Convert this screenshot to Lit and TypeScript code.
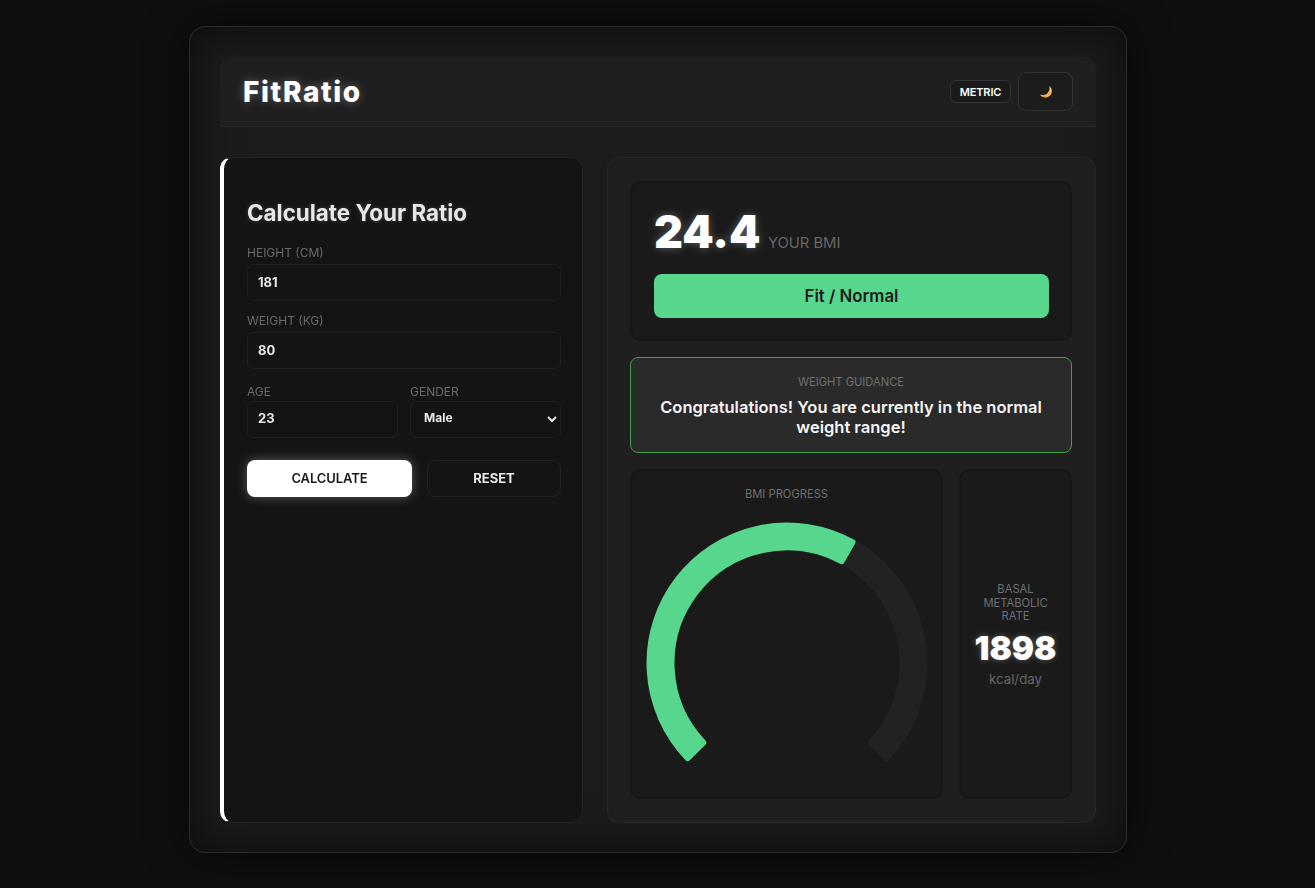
import { LitElement, html, css, svg } from 'lit'
import { customElement, property } from 'lit/decorators.js'

const CX = 145
const CY = 145
const OUTER = 140.5
const INNER = 112.5
const CORNER = 3

// point on circle, angle in degrees clockwise from 12 o'clock
const polar = (r: number, deg: number) => {
  const a = (deg * Math.PI) / 180
  return `${(CX + r * Math.sin(a)).toFixed(2)} ${(CY - r * Math.cos(a)).toFixed(2)}`
}

// annular sector, slightly shrunk; the round-joined stroke gives the small corner radius
const sector = (from: number, to: number) => {
  const ro = OUTER - CORNER
  const ri = INNER + CORNER
  const padO = ((CORNER / ro) * 180) / Math.PI
  const padI = ((CORNER / ri) * 180) / Math.PI
  const large = to - from > 180 ? 1 : 0
  return `M${polar(ro, from + padO)} A${ro} ${ro} 0 ${large} 1 ${polar(ro, to - padO)} L${polar(ri, to - padI)} A${ri} ${ri} 0 ${large} 0 ${polar(ri, from + padI)} Z`
}

@customElement('bmi-gauge')
export class BmiGauge extends LitElement {
  @property({ type: Number }) value = 24.4
  @property({ type: Number }) max = 40

  static styles = css`
    :host {
      display: block;
      line-height: 0;
    }
    svg {
      display: block;
      margin: 0 auto;
    }
    .track {
      fill: #222222;
      stroke: #222222;
      stroke-width: 6;
      stroke-linejoin: round;
    }
    .bar {
      fill: #57d68d;
      stroke: #57d68d;
      stroke-width: 6;
      stroke-linejoin: round;
    }
  `

  render() {
    const end = -135 + (this.value / this.max) * 270
    return html`<svg width="290" height="260" viewBox="0 0 290 260">
      ${svg`<path class="track" d=${sector(-135, 135)}></path>`}
      ${svg`<path class="bar" d=${sector(-135, end)}></path>`}
    </svg>`
  }
}

@customElement('app-root')
export class AppRoot extends LitElement {
  static styles = css`
    :host {
      display: block;
      min-height: 888px;
      background: #0f0f0f;
      font-family: Inter, 'Liberation Sans', sans-serif;
      color: #ffffff;
    }

    * {
      box-sizing: border-box;
    }

    .page {
      display: flex;
      justify-content: center;
      padding-top: 26px;
      padding-left: 1px;
    }

    .shell {
      width: 938px;
      height: 827px;
      padding: 30px;
      background: #1c1c1c;
      border: 1px solid #2a2a2a;
      border-radius: 16px;
      box-shadow: 0 0 40px rgba(0, 0, 0, 0.55), inset 0 0 50px rgba(0, 0, 0, 0.6);
    }

    .header {
      display: flex;
      align-items: center;
      justify-content: space-between;
      height: 70px;
      padding: 0 23px;
      background: #1f1f1f;
      border-bottom: 1px solid #282828;
      border-radius: 12px 12px 0 0;
    }

    .logo {
      font-size: 28px;
      font-weight: 800;
      letter-spacing: 1.6px;
      text-shadow: 0 0 10px rgba(255, 255, 255, 0.3);
    }

    .tools {
      display: flex;
      align-items: center;
      gap: 7px;
    }

    .unit {
      display: flex;
      align-items: center;
      justify-content: center;
      width: 61px;
      height: 23px;
      background: #1a1a1a;
      border: 1px solid #333333;
      border-radius: 6px;
      font-size: 11px;
      font-weight: 600;
      letter-spacing: -0.15px;
    }

    .theme {
      display: flex;
      align-items: center;
      justify-content: center;
      width: 55px;
      height: 39px;
      background: #1c1c1c;
      border: 1px solid #333333;
      border-radius: 8px;
    }

    .columns {
      display: grid;
      grid-template-columns: 363px 489px;
      gap: 24px;
      margin-top: 30px;
      height: 665px;
    }

    /* the form column is slightly soft in the reference */
    .form {
      padding: 39px 21px 0 23px;
      background: #141414;
      border: 1px solid #232323;
      border-left: 4px solid #ffffff;
      border-radius: 12px;
      filter: blur(0.4px);
    }

    h2 {
      margin: 0 0 15.5px;
      font-size: 22.4px;
      font-weight: 700;
      line-height: 32px;
      color: #e8e8e8;
      text-shadow: 0 0 4px rgba(255, 255, 255, 0.2);
    }

    .field {
      display: flex;
      flex-direction: column;
      margin-bottom: 11.5px;
    }

    label {
      font-size: 12px;
      line-height: 15px;
      color: #6a6a6a;
      text-transform: uppercase;
      margin-bottom: 4.5px;
    }

    input,
    select {
      width: 100%;
      height: 37px;
      padding: 0 10px 2px;
      background: #141414;
      border: 1px solid #1f1f1f;
      border-radius: 6px;
      color: #e8e8e8;
      font-family: inherit;
      font-size: 13px;
      font-weight: 700;
      outline: none;
    }

    select {
      padding: 0 6px 4px 9px;
      font-size: 12px;
      font-weight: 700;
      color-scheme: dark;
    }

    .pair {
      display: grid;
      grid-template-columns: 151px 151px;
      gap: 12px;
      margin-top: 14.5px;
    }

    .pair label {
      margin-bottom: 2px;
    }

    .actions {
      display: grid;
      grid-template-columns: 165px 134px;
      gap: 15px;
      margin-top: 10.5px;
    }

    button {
      height: 37px;
      padding-bottom: 2px;
      border-radius: 8px;
      font-family: inherit;
      font-size: 13px;
      text-transform: uppercase;
      cursor: pointer;
    }

    .primary {
      background: #ffffff;
      border: none;
      color: #1a1a1a;
      font-weight: 600;
      letter-spacing: -0.1px;
      box-shadow: 0 0 12px rgba(255, 255, 255, 0.3);
    }

    .secondary {
      background: #141414;
      border: 1px solid #222222;
      color: #e8e8e8;
      font-weight: 700;
    }

    .results {
      display: flex;
      flex-direction: column;
      gap: 16px;
      padding: 23px 23px 23px 22px;
      background: #1f1f1f;
      border: 1px solid #282828;
      border-radius: 12px;
    }

    .card {
      background: #1a1a1a;
      border: 1px solid #161616;
      border-radius: 10px;
      box-shadow: inset 0 0 2px rgba(0, 0, 0, 0.3);
    }

    .bmi {
      height: 160px;
      padding: 23px 22px 23px 23px;
    }

    .score {
      display: flex;
      align-items: baseline;
      gap: 7.5px;
      height: 69px;
    }

    .number {
      font-size: 44.8px;
      font-weight: 900;
      line-height: 54px;
      text-shadow: 0 0 8px rgba(255, 255, 255, 0.3);
    }

    .caption {
      font-size: 14.8px;
      color: #666666;
      text-transform: uppercase;
    }

    .status {
      display: flex;
      align-items: center;
      justify-content: center;
      height: 44px;
      background: #57d68d;
      border-radius: 8px;
      color: #1a1a1a;
      font-size: 16.8px;
      font-weight: 600;
    }

    .guidance {
      height: 96px;
      padding: 18px 16px 0;
      background: #2a2a2a;
      border: 1px solid #3fa14a;
      border-radius: 8px;
      text-align: center;
    }

    .small {
      font-size: 11.2px;
      line-height: 13.5px;
      color: #707070;
      text-transform: uppercase;
    }

    .message {
      margin-top: 7px;
      font-size: 16.5px;
      font-weight: 600;
      line-height: 20px;
      color: #f5f5f5;
    }

    .bottom {
      display: grid;
      grid-template-columns: 313px 113px;
      grid-template-rows: 330px;
      gap: 16px;
    }

    .gauge {
      padding-top: 18px;
      text-align: center;
    }

    bmi-gauge {
      margin-top: 16px;
    }

    .rate {
      display: flex;
      flex-direction: column;
      align-items: center;
      justify-content: center;
      padding: 2px 16px 0;
      text-align: center;
    }

    .rate .value {
      margin-top: 4px;
      font-size: 33px;
      font-weight: 900;
      line-height: 40px;
      text-shadow: 0 0 6px rgba(255, 255, 255, 0.3);
    }

    .unit-label {
      margin-top: 3px;
      font-size: 13.3px;
      color: #666666;
    }
  `

  render() {
    return html`
      <div class="page">
        <div class="shell">
          <header class="header">
            <div class="logo">FitRatio</div>
            <div class="tools">
              <div class="unit">METRIC</div>
              <div class="theme">
                <svg width="14" height="14" viewBox="0 0 14 14">
                  <defs>
                    <linearGradient id="moon" x1="0.8" y1="0" x2="0.2" y2="1">
                      <stop offset="0" stop-color="#ffcf70"></stop>
                      <stop offset="1" stop-color="#f5993d"></stop>
                    </linearGradient>
                  </defs>
                  <path d="M10.5 1C11 4.4 10 6.9 8.2 8.4 6.4 9.8 3.9 10.2 1 9.8 2.4 11.9 4.8 12.9 7.3 12.5 10.2 12 12.6 9.6 12.8 6.8 13 4.6 12.2 2.4 10.5 1Z" fill="url(#moon)"></path>
                </svg>
              </div>
            </div>
          </header>

          <div class="columns">
            <section class="form">
              <h2>Calculate Your Ratio</h2>
              <div class="field">
                <label>Height (cm)</label>
                <input .value=${'181'} />
              </div>
              <div class="field">
                <label>Weight (kg)</label>
                <input .value=${'80'} />
              </div>
              <div class="pair">
                <div class="field">
                  <label>Age</label>
                  <input .value=${'23'} />
                </div>
                <div class="field">
                  <label>Gender</label>
                  <select>
                    <option>Male</option>
                    <option>Female</option>
                  </select>
                </div>
              </div>
              <div class="actions">
                <button class="primary">Calculate</button>
                <button class="secondary">Reset</button>
              </div>
            </section>

            <section class="results">
              <div class="card bmi">
                <div class="score">
                  <span class="number">24.4</span>
                  <span class="caption">Your BMI</span>
                </div>
                <div class="status">Fit / Normal</div>
              </div>

              <div class="guidance">
                <div class="small">Weight Guidance</div>
                <div class="message">Congratulations! You are currently in the normal weight range!</div>
              </div>

              <div class="bottom">
                <div class="card gauge">
                  <div class="small">BMI Progress</div>
                  <bmi-gauge .value=${24.4} .max=${40}></bmi-gauge>
                </div>
                <div class="card rate">
                  <div class="small">Basal Metabolic Rate</div>
                  <div class="value">1898</div>
                  <div class="unit-label">kcal/day</div>
                </div>
              </div>
            </section>
          </div>
        </div>
      </div>
    `
  }
}
